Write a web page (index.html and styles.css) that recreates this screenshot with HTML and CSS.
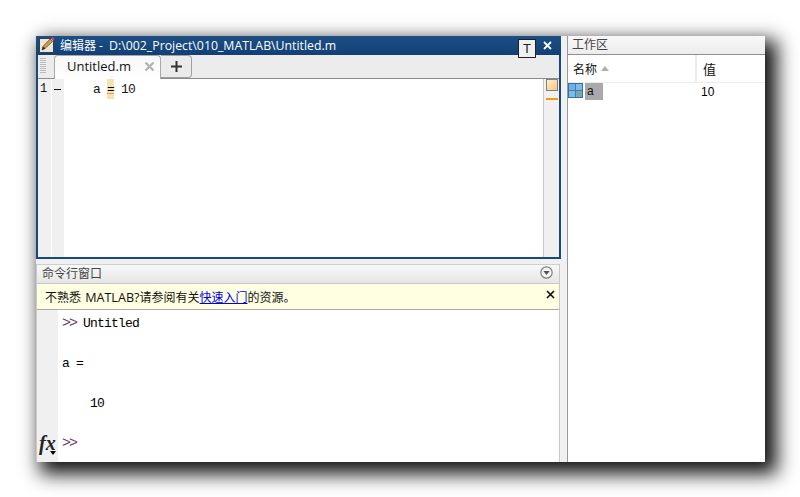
FILE: index.html
```html
<!DOCTYPE html>
<html lang="zh">
<head>
<meta charset="utf-8">
<title>MATLAB</title>
<link rel="stylesheet" href="styles.css">
</head>
<body>
<div class="window">
  <div class="left">
    <section class="editor">
      <header class="titlebar">
        <svg class="edit-icon" width="16" height="16" viewBox="0 0 16 16">
          <rect x="0.500" y="1.500" width="14" height="14" fill="#e9e6de" stroke="#3c3c3c"/>
          <path d="M3 13l1-3.500 7-7.500 2.500 2.500-7.500 7z" fill="#d29a4c" stroke="#5d3f1b" stroke-width=".7"/>
          <path d="M3 13l1-3.500 2.500 2z" fill="#2b2b2b"/>
          <path d="M11.500 1.500l2.500 2.500 1.500-2-1.800-2z" fill="#c9407f"/>
        </svg>
        <span class="title-text">编辑器 - <span class="latin">D:\002_Project\010_MATLAB\Untitled.m</span></span>
        <span class="pin">T</span>
        <svg class="close" width="9" height="9" viewBox="0 0 9 9"><path d="M1 1l7 7M8 1l-7 7" stroke="#fff" stroke-width="1.800"/></svg>
      </header>
      <div class="tabbar">
        <div class="grip"></div>
        <div class="tab">
          <span class="tab-name">Untitled.m</span>
          <svg class="tab-x" width="11" height="11" viewBox="0 0 11 11"><path d="M1.500 1.500l8 8M9.500 1.500l-8 8" stroke="#b4b4b4" stroke-width="2.400"/></svg>
        </div>
        <div class="tab-add"><svg width="11" height="11" viewBox="0 0 11 11"><path d="M5.500 0v11M0 5.500h11" stroke="#333" stroke-width="2"/></svg></div>
      </div>
      <div class="code">
        <div class="linenos">1</div>
        <div class="marks"><span class="dash"></span></div>
        <div class="source"><span class="var">a</span> <span class="eq">=</span> <span class="num">10</span></div>
        <div class="scroll"><span class="warn-box"></span><span class="warn-line"></span></div>
      </div>
    </section>
    <section class="command">
      <header class="cmd-head">
        <span class="panel-title">命令行窗口</span>
        <svg class="menu-btn" width="13" height="13" viewBox="0 0 13 13"><circle cx="6.500" cy="6.500" r="5.700" fill="#f4f4f4" stroke="#808080" stroke-width="1.200"/><path d="M3.300 5h6.400l-3.200 4z" fill="#555"/></svg>
      </header>
      <div class="notice">
        <span>不熟悉 <span class="latin">MATLAB?</span>请参阅有关<a class="link">快速入门</a>的资源。</span>
        <svg class="notice-x" width="9" height="9" viewBox="0 0 9 9"><path d="M1 1l7 7M8 1l-7 7" stroke="#000" stroke-width="1.500"/></svg>
      </div>
      <div class="cmd-body">
        <div class="fx-gutter">
          <span class="fx">fx</span>
          <span class="fx-arrow"></span>
        </div>
        <div class="console">
          <div class="row"><span class="prompt">&gt;&gt;</span> Untitled</div>
          <div class="row"></div>
          <div class="row">a =</div>
          <div class="row"></div>
          <div class="row">    10</div>
          <div class="row"></div>
          <div class="row"><span class="prompt">&gt;&gt;</span></div>
        </div>
      </div>
    </section>
  </div>
  <aside class="workspace">
    <header class="ws-head"><span class="panel-title">工作区</span></header>
    <div class="ws-cols">
      <div class="col-name">名称<span class="sort"></span></div>
      <div class="col-val">值</div>
    </div>
    <div class="ws-row">
      <svg class="grid-icon" width="15" height="15" viewBox="0 0 15 15">
        <rect x=".5" y=".5" width="14" height="14" fill="#7db4dc" stroke="#2f72a8"/>
        <path d="M8 1h6v6H8zM1 8h6v6H1z" fill="#7fb9e6"/>
        <path d="M8 8h6v6H8z" fill="#79a9b0"/>
        <path d="M1 1h6v6H1z" fill="#6fb0e6"/>
        <path d="M7.500 1v13M1 7.500h13" stroke="#3f7fb0"/>
      </svg>
      <span class="ws-var">a</span>
      <span class="ws-val">10</span>
    </div>
  </aside>
</div>
</body>
</html>
```
FILE: styles.css
```css
html, body { margin: 0; padding: 0; background: #fff; }
body { width: 800px; height: 497px; overflow: hidden; padding: 36px 0 0 36px; box-sizing: border-box; font-family: "Open Sans", "Noto Sans CJK SC", sans-serif; }
svg { display: block; flex: none; }
.latin { font-size: 12.300px; }

.window { width: 729px; height: 426px; display: flex; background: #f0f0f0; box-shadow: 8px 8px 18px 4px rgba(0,0,0,.92); }
.left { width: 525px; display: flex; flex-direction: column; gap: 5px; flex: none; }

.editor { height: 223px; display: flex; flex-direction: column; border: 2px solid #17497f; border-top: 0; box-sizing: border-box; background: #f0f0f0; }
.titlebar { height: 19px; margin: 0 -2px; padding: 0 9px 2px 3px; box-sizing: border-box; display: flex; align-items: center; flex: none; background: linear-gradient(#1c4f85, #124076); color: #fff; font-size: 12px; position: relative; }
.edit-icon { margin-right: 5px; margin-top: 1px; }
.title-text { flex: 1; white-space: nowrap; }
.title-text .latin { margin-left: 3px; }
.pin { position: absolute; left: 482px; top: 3px; width: 18px; height: 19px; box-sizing: border-box; border: 1px solid #222; background: #f0f0f0; color: #222; font: 13px/18px "Liberation Sans", sans-serif; text-align: center; z-index: 1; }
.close { margin-top: 2px; }

.tabbar { height: 24px; display: flex; flex: none; background: #ececec; border-bottom: 1px solid #8c8c8c; box-sizing: border-box; padding-left: 16px; position: relative; align-items: flex-end; }
.grip { position: absolute; left: 2px; top: 3px; width: 6px; height: 16px; background: repeating-linear-gradient(#b8b8b8 0 1px, #f0f0f0 1px 2px); }
.tab { width: 107px; height: 24px; margin-bottom: -1px; padding: 0 5px 3px 12px; box-sizing: border-box; display: flex; align-items: center; justify-content: space-between; background: linear-gradient(#f7f7f7, #fff); border: 1px solid #a8a8a8; border-bottom: 0; border-radius: 4px 4px 0 0; font-size: 13px; color: #111; }
.tab-add { width: 31px; height: 23px; box-sizing: border-box; display: flex; align-items: center; justify-content: center; background: #ebebeb; border: 1px solid #a0a0a0; border-left: 0; border-radius: 0 4px 4px 0; margin-bottom: 0; padding-bottom: 1px; }

.code { flex: 1; display: flex; background: #fff; min-height: 0; }
.linenos { width: 13px; background: #f0f0f0; font: 12px/21px "Liberation Mono", monospace; color: #111; padding-left: 2px; box-sizing: border-box; }
.marks { width: 13px; background: #f0f0f0; border-left: 1px solid #fff; box-sizing: border-box; position: relative; }
.dash { display: block; width: 7px; height: 1px; background: #111; margin: 10px 0 0 2px; }
.source { flex: 1; padding: 0 0 0 29px; font: 13px/22px "Liberation Mono", monospace; letter-spacing: -0.800px; white-space: pre; }
.var { color: #111; }
.eq { display: inline-block; height: 20px; vertical-align: top; background: linear-gradient(#f3e2b3 14px, #f0a030 14px 15px, #f3e2b3 15px); }
.num { color: #1a1a1a; }
.scroll { width: 16px; box-sizing: border-box; background: #f0f0f0; border-left: 1px solid #c8c8c8; display: flex; flex-direction: column; align-items: center; }
.warn-box { width: 12px; height: 12px; box-sizing: border-box; border: 1px solid #808080; background: linear-gradient(135deg, #fff0d0, #fcc278); }
.warn-line { width: 12px; height: 2px; background: #f39a16; margin-top: 7px; }

.command { flex: 1; display: flex; flex-direction: column; min-height: 0; margin-right: 1px; background: #fff; border-left: 1px solid #c8c8c8; border-right: 1px solid #c8c8c8; }
.cmd-head { height: 19px; flex: none; display: flex; align-items: center; justify-content: space-between; padding: 0 6px 3px 5px; background: linear-gradient(#f8f8f8, #e6e6e6); border-top: 1px solid #cfcfcf; box-sizing: border-box; }
.panel-title { font-size: 12px; color: #444; }
.notice { height: 27px; flex: none; display: flex; align-items: center; justify-content: space-between; padding: 0 4px 0 8px; box-sizing: border-box; background: #ffffe1; border-bottom: 1px solid #a8a8a8; border-top: 1px solid #c8c8c8; font-size: 12px; color: #111; }
.notice .latin { font-size: 12.600px; margin-left: 1px; }
.notice-x { margin-top: -4px; }
.link { color: #0000ee; text-decoration: underline; }
.cmd-body { flex: 1; display: flex; min-height: 0; }
.fx-gutter { width: 21px; background: #f0f0f0; position: relative; flex: none; }
.fx { position: absolute; left: 2px; bottom: 8px; font: italic 700 20px/22px "Liberation Serif", serif; color: #222; }
.fx-arrow { position: absolute; left: 13px; bottom: 7px; border: 3px solid transparent; border-top: 4px solid #000; border-bottom: 0; }
.console { flex: 1; padding: 4px 0 0 4px; font: 13px/20px "Liberation Mono", monospace; letter-spacing: -0.800px; color: #000; }
.row { height: 20px; white-space: pre; }
.prompt { font-size: 15px; line-height: 1; letter-spacing: -2px; color: #6a3a6a; }

.workspace { flex: 1; margin-left: 6px; background: #fff; display: flex; flex-direction: column; border-left: 1px solid #999; }
.ws-head { height: 19px; flex: none; box-sizing: border-box; display: flex; align-items: center; padding: 0 0 3px 4px; background: linear-gradient(#f8f8f8, #ececec); border-bottom: 1px solid #8f8f8f; }
.ws-cols { height: 28px; flex: none; display: flex; align-items: center; border-bottom: 1px solid #ececec; font-size: 12px; color: #111; box-sizing: border-box; }
.col-name { width: 129px; height: 100%; display: flex; align-items: center; gap: 4px; padding: 0 0 0 5px; box-sizing: border-box; border-right: 2px solid #ececec; }
.col-val { padding: 0 0 0 6px; font-size: 13px; }
.sort { width: 0; height: 0; border: 4px solid transparent; border-bottom: 5px solid #b0b0a0; border-top: 0; }
.ws-row { height: 18px; display: flex; align-items: flex-start; font-size: 12px; }
.grid-icon { margin-left: 0; }
.ws-var { width: 18px; height: 17px; margin-left: 2px; background: #a9a9a9; color: #111; line-height: 17px; padding-left: 2px; box-sizing: border-box; font-family: "Liberation Sans", sans-serif; }
.ws-val { margin-left: 98px; line-height: 18px; font-family: "Liberation Sans", sans-serif; }
```
